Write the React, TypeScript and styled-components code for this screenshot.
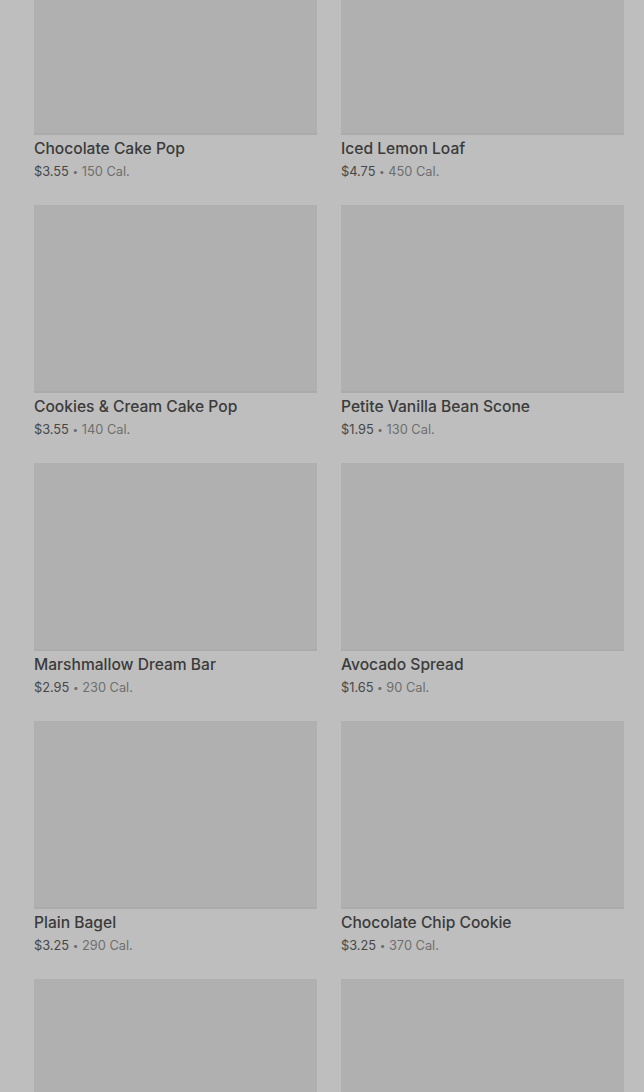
import React from "react";
import styled, { createGlobalStyle } from "styled-components";

const GlobalStyle = createGlobalStyle`
  html, body { margin: 0; padding: 0; background: #bebebe; }
  body { font-family: Inter, "Noto Sans", "Liberation Sans", sans-serif; overflow: hidden; }
`;

const Page = styled.div`
  background: #bebebe;
  min-height: 1092px;
  padding: 0 20px 0 34px;
  overflow: hidden;
`;

const Grid = styled.ul`
  list-style: none;
  margin: -53px 0 0 0;
  padding: 0;
  display: grid;
  grid-template-columns: 283px 283px;
  column-gap: 24px;
  row-gap: 0;
`;

const Card = styled.li`
  display: flex;
  flex-direction: column;
  height: 258px;
`;

const Thumb = styled.div`
  height: 188px;
  background: #b0b0b0;
  border-bottom: 2px solid #ababab;
  box-sizing: border-box;
`;

const Name = styled.div`
  margin-top: 3px;
  font-size: 15.6px;
  line-height: 22px;
  font-weight: 500;
  color: #3b3b3b;
`;

const Meta = styled.div`
  margin-top: 0;
  font-size: 12.8px;
  line-height: 22px;
  color: #6e6e6e;
`;

const Price = styled.span`
  color: #474747;
`;

const Dot = styled.span`
  font-size: 10px;
  vertical-align: 1px;
`;

const items = [
  { name: "Chocolate Cake Pop", price: "$3.55", cal: "150" },
  { name: "Iced Lemon Loaf", price: "$4.75", cal: "450" },
  { name: "Cookies & Cream Cake Pop", price: "$3.55", cal: "140" },
  { name: "Petite Vanilla Bean Scone", price: "$1.95", cal: "130" },
  { name: "Marshmallow Dream Bar", price: "$2.95", cal: "230" },
  { name: "Avocado Spread", price: "$1.65", cal: "90" },
  { name: "Plain Bagel", price: "$3.25", cal: "290" },
  { name: "Chocolate Chip Cookie", price: "$3.25", cal: "370" },
  { name: "", price: "", cal: "" },
  { name: "", price: "", cal: "" },
];

export default function App() {
  return (
    <>
      <GlobalStyle />
      <Page>
        <Grid>
          {items.map((it, i) => (
            <Card key={i}>
              <Thumb />
              {it.name && <Name>{it.name}</Name>}
              {it.name && (
                <Meta>
                  <Price>{it.price}</Price> <Dot>•</Dot> {it.cal} Cal.
                </Meta>
              )}
            </Card>
          ))}
        </Grid>
      </Page>
    </>
  );
}
